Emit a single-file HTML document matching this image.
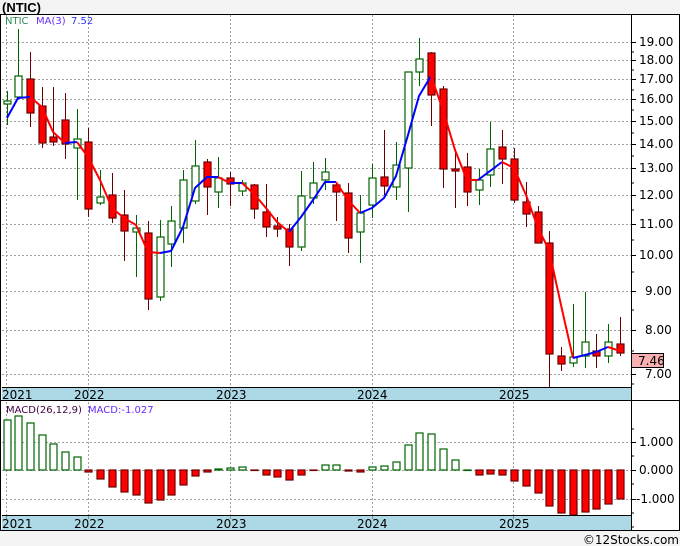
<!DOCTYPE html>
<html><head><meta charset="utf-8"><style>
html,body{margin:0;padding:0;background:#f4f4f4;}
svg{display:block;font-family:"DejaVu Sans","Liberation Sans",sans-serif;}
.gw{stroke:#006400;stroke-width:1;}
.rw{stroke:#6b0000;stroke-width:1;}
.gb{fill:#fff;stroke:#006400;stroke-width:1.2;}
.rb{fill:#ff0000;stroke:#6b0000;stroke-width:1.2;}
.grid{stroke:#a0a0a0;stroke-width:1;stroke-dasharray:2,2;}
.ax{font-size:12px;fill:#000;}
</style></head><body>
<svg width="680" height="546" viewBox="0 0 680 546" xmlns="http://www.w3.org/2000/svg">
<rect x="0" y="0" width="680" height="546" fill="#f4f4f4"/>
<text x="2" y="12" font-size="13" font-weight="bold" font-family="Liberation Sans,sans-serif" fill="#000">(NTIC)</text>
<rect x="0.5" y="14.5" width="679" height="516" fill="#fff" stroke="#000"/>
<!-- price grid -->
<g class="grid">
<line x1="2" x2="631" y1="42.5" y2="42.5"/><line x1="2" x2="631" y1="60.5" y2="60.5"/><line x1="2" x2="631" y1="79.5" y2="79.5"/><line x1="2" x2="631" y1="99.5" y2="99.5"/><line x1="2" x2="631" y1="121.5" y2="121.5"/><line x1="2" x2="631" y1="144.5" y2="144.5"/><line x1="2" x2="631" y1="168.5" y2="168.5"/><line x1="2" x2="631" y1="195.5" y2="195.5"/><line x1="2" x2="631" y1="224.5" y2="224.5"/><line x1="2" x2="631" y1="255.5" y2="255.5"/><line x1="2" x2="631" y1="291.5" y2="291.5"/><line x1="2" x2="631" y1="330.5" y2="330.5"/><line x1="2" x2="631" y1="374.5" y2="374.5"/>
<line x1="6.5" x2="6.5" y1="15" y2="387"/><line x1="88.5" x2="88.5" y1="15" y2="387"/><line x1="230.5" x2="230.5" y1="15" y2="387"/><line x1="372.5" x2="372.5" y1="15" y2="387"/><line x1="513.5" x2="513.5" y1="15" y2="387"/>
<line x1="2" x2="631" y1="442.5" y2="442.5"/><line x1="2" x2="631" y1="470.5" y2="470.5"/><line x1="2" x2="631" y1="499.5" y2="499.5"/>
<line x1="6.5" x2="6.5" y1="402" y2="515"/><line x1="88.5" x2="88.5" y1="402" y2="515"/><line x1="230.5" x2="230.5" y1="402" y2="515"/><line x1="372.5" x2="372.5" y1="402" y2="515"/><line x1="513.5" x2="513.5" y1="402" y2="515"/>
</g>
<!-- candles -->
<g>
<line class="gw" x1="7.5" x2="7.5" y1="91" y2="125"/><rect class="gb" x="4" y="101" width="7" height="3"/>
<line class="gw" x1="18.5" x2="18.5" y1="29" y2="99"/><rect class="gb" x="15" y="76" width="7" height="21"/>
<line class="rw" x1="30.5" x2="30.5" y1="52" y2="127"/><rect class="rb" x="27" y="79" width="7" height="34"/>
<line class="rw" x1="42.5" x2="42.5" y1="87" y2="148"/><rect class="rb" x="39" y="106" width="7" height="37"/>
<line class="rw" x1="53.5" x2="53.5" y1="87" y2="146"/><rect class="rb" x="50" y="137" width="7" height="5"/>
<line class="rw" x1="65.5" x2="65.5" y1="93" y2="159"/><rect class="rb" x="62" y="120" width="7" height="24"/>
<line class="gw" x1="77.5" x2="77.5" y1="109" y2="200"/><rect class="gb" x="74" y="139" width="7" height="9"/>
<line class="rw" x1="88.5" x2="88.5" y1="128" y2="217"/><rect class="rb" x="85" y="142" width="7" height="67"/>
<line class="gw" x1="100.5" x2="100.5" y1="170" y2="205"/><rect class="gb" x="97" y="197" width="7" height="6"/>
<line class="rw" x1="112.5" x2="112.5" y1="173" y2="223"/><rect class="rb" x="109" y="195" width="7" height="23"/>
<line class="rw" x1="124.5" x2="124.5" y1="190" y2="261"/><rect class="rb" x="121" y="215" width="7" height="16"/>
<line class="gw" x1="136.5" x2="136.5" y1="215" y2="277"/><rect class="gb" x="133" y="228" width="7" height="4"/>
<line class="rw" x1="148.5" x2="148.5" y1="221" y2="310"/><rect class="rb" x="145" y="233" width="7" height="66"/>
<line class="gw" x1="160.5" x2="160.5" y1="220" y2="301"/><rect class="gb" x="157" y="237" width="7" height="60"/>
<line class="gw" x1="171.5" x2="171.5" y1="206" y2="267"/><rect class="gb" x="168" y="221" width="7" height="23"/>
<line class="gw" x1="183.5" x2="183.5" y1="170" y2="243"/><rect class="gb" x="180" y="180" width="7" height="48"/>
<line class="gw" x1="195.5" x2="195.5" y1="140" y2="204"/><rect class="gb" x="192" y="166" width="7" height="35"/>
<line class="rw" x1="207.5" x2="207.5" y1="159" y2="215"/><rect class="rb" x="204" y="162" width="7" height="25"/>
<line class="gw" x1="218.5" x2="218.5" y1="157" y2="208"/><rect class="gb" x="215" y="178" width="7" height="14"/>
<line class="rw" x1="230.5" x2="230.5" y1="172" y2="206"/><rect class="rb" x="227" y="178" width="7" height="6"/>
<line class="gw" x1="242.5" x2="242.5" y1="180" y2="196"/><rect class="gb" x="239" y="183" width="7" height="8"/>
<line class="rw" x1="254.5" x2="254.5" y1="184" y2="219"/><rect class="rb" x="251" y="185" width="7" height="24"/>
<line class="rw" x1="266.5" x2="266.5" y1="184" y2="237"/><rect class="rb" x="263" y="212" width="7" height="15"/>
<line class="rw" x1="277.5" x2="277.5" y1="217" y2="237"/><rect class="rb" x="274" y="226" width="7" height="3"/>
<line class="rw" x1="289.5" x2="289.5" y1="224" y2="266"/><rect class="rb" x="286" y="229" width="7" height="18"/>
<line class="gw" x1="301.5" x2="301.5" y1="171" y2="251"/><rect class="gb" x="298" y="196" width="7" height="51"/>
<line class="gw" x1="313.5" x2="313.5" y1="162" y2="204"/><rect class="gb" x="310" y="183" width="7" height="15"/>
<line class="gw" x1="325.5" x2="325.5" y1="158" y2="190"/><rect class="gb" x="322" y="172" width="7" height="8"/>
<line class="rw" x1="336.5" x2="336.5" y1="182" y2="221"/><rect class="rb" x="333" y="185" width="7" height="7"/>
<line class="rw" x1="348.5" x2="348.5" y1="183" y2="253"/><rect class="rb" x="345" y="193" width="7" height="45"/>
<line class="gw" x1="360.5" x2="360.5" y1="195" y2="263"/><rect class="gb" x="357" y="213" width="7" height="19"/>
<line class="gw" x1="372.5" x2="372.5" y1="164" y2="218"/><rect class="gb" x="369" y="178" width="7" height="27"/>
<line class="rw" x1="384.5" x2="384.5" y1="130" y2="195"/><rect class="rb" x="381" y="177" width="7" height="9"/>
<line class="gw" x1="396.5" x2="396.5" y1="142" y2="200"/><rect class="gb" x="393" y="165" width="7" height="22"/>
<line class="gw" x1="408.5" x2="408.5" y1="72" y2="212"/><rect class="gb" x="405" y="72" width="7" height="96"/>
<line class="gw" x1="419.5" x2="419.5" y1="38" y2="86"/><rect class="gb" x="416" y="59" width="7" height="13"/>
<line class="rw" x1="431.5" x2="431.5" y1="52" y2="126"/><rect class="rb" x="428" y="53" width="7" height="42"/>
<line class="rw" x1="443.5" x2="443.5" y1="86" y2="188"/><rect class="rb" x="440" y="89" width="7" height="80"/>
<line class="rw" x1="455.5" x2="455.5" y1="149" y2="208"/><rect class="rb" x="452" y="169" width="7" height="2"/>
<line class="rw" x1="467.5" x2="467.5" y1="153" y2="206"/><rect class="rb" x="464" y="167" width="7" height="25"/>
<line class="gw" x1="479.5" x2="479.5" y1="169" y2="205"/><rect class="gb" x="476" y="180" width="7" height="10"/>
<line class="gw" x1="490.5" x2="490.5" y1="122" y2="187"/><rect class="gb" x="487" y="149" width="7" height="26"/>
<line class="rw" x1="502.5" x2="502.5" y1="130" y2="184"/><rect class="rb" x="499" y="147" width="7" height="12"/>
<line class="rw" x1="514.5" x2="514.5" y1="148" y2="203"/><rect class="rb" x="511" y="159" width="7" height="41"/>
<line class="rw" x1="526.5" x2="526.5" y1="182" y2="227"/><rect class="rb" x="523" y="202" width="7" height="12"/>
<line class="rw" x1="538.5" x2="538.5" y1="206" y2="243"/><rect class="rb" x="535" y="212" width="7" height="31"/>
<line class="rw" x1="549.5" x2="549.5" y1="231" y2="387"/><rect class="rb" x="546" y="243" width="7" height="111"/>
<line class="rw" x1="561.5" x2="561.5" y1="347" y2="371"/><rect class="rb" x="558" y="356" width="7" height="8"/>
<line class="gw" x1="573.5" x2="573.5" y1="304" y2="367"/><rect class="gb" x="570" y="357" width="7" height="6"/>
<line class="gw" x1="585.5" x2="585.5" y1="292" y2="368"/><rect class="gb" x="582" y="342" width="7" height="14"/>
<line class="rw" x1="596.5" x2="596.5" y1="334" y2="368"/><rect class="rb" x="593" y="351" width="7" height="5"/>
<line class="gw" x1="608.5" x2="608.5" y1="324" y2="363"/><rect class="gb" x="605" y="342" width="7" height="14"/>
<line class="rw" x1="620.5" x2="620.5" y1="317" y2="356"/><rect class="rb" x="617" y="344" width="7" height="9"/>
</g>
<!-- MA line -->
<g fill="none" stroke-width="2" stroke-linejoin="round">
<polyline stroke="#0000ff" points="7,118 18,98 30,97"/>
<polyline stroke="#ff0000" points="30,97 42,107 53,132 65,143"/>
<polyline stroke="#0000ff" points="65,143 77,142"/>
<polyline stroke="#ff0000" points="77,142 88,157 100,180 112,208 124,218 136,225 148,252 160,253"/>
<polyline stroke="#0000ff" points="160,253 171,251 183,227 195,188 207,177 218,177"/>
<polyline stroke="#ff0000" points="218,177 230,183"/>
<polyline stroke="#0000ff" points="230,183 242,183"/>
<polyline stroke="#ff0000" points="242,183 254,194 266,208 277,222 289,232"/>
<polyline stroke="#0000ff" points="289,232 301,217 313,200 325,182 336,182"/>
<polyline stroke="#ff0000" points="336,182 348,200 360,213"/>
<polyline stroke="#0000ff" points="360,213 372,208 384,198 396,176 408,135 419,96 431,76"/>
<polyline stroke="#ff0000" points="431,76 443,110 455,150 467,180 478,180"/>
<polyline stroke="#0000ff" points="478,180 490,171 502,162"/>
<polyline stroke="#ff0000" points="502,162 514,168 526,195 538,228 549,250 561,305 573,358"/>
<polyline stroke="#0000ff" points="573,358 585,355 596,352 608,347"/>
<polyline stroke="#ff0000" points="608,347 620,351"/>
</g>
<text x="5" y="24" font-size="10" fill="#2e8b57">NTIC</text>
<text x="36" y="24" font-size="10" fill="#6a2cff">MA(3)</text>
<text x="71" y="24" font-size="10" fill="#3333ff">7.52</text>
<!-- MACD bars -->
<g>
<rect class="gb" x="4" y="420" width="7" height="50"/><rect class="gb" x="15" y="416" width="7" height="54"/><rect class="gb" x="27" y="423" width="7" height="47"/><rect class="gb" x="39" y="435" width="7" height="35"/><rect class="gb" x="50" y="444" width="7" height="26"/><rect class="gb" x="62" y="452" width="7" height="18"/><rect class="gb" x="74" y="457" width="7" height="13"/>
<rect class="rb" x="85" y="470" width="7" height="2"/><rect class="rb" x="97" y="470" width="7" height="9"/><rect class="rb" x="109" y="470" width="7" height="17"/><rect class="rb" x="121" y="470" width="7" height="22"/><rect class="rb" x="133" y="470" width="7" height="25"/><rect class="rb" x="145" y="470" width="7" height="33"/><rect class="rb" x="157" y="470" width="7" height="30"/><rect class="rb" x="168" y="470" width="7" height="25"/><rect class="rb" x="180" y="470" width="7" height="15"/><rect class="rb" x="192" y="470" width="7" height="6"/><rect class="rb" x="204" y="470" width="7" height="2"/>
<rect class="gb" x="215" y="469" width="7" height="1"/><rect class="gb" x="227" y="468" width="7" height="2"/><rect class="gb" x="239" y="467" width="7" height="3"/>
<rect class="rb" x="251" y="470" width="7" height="0.5"/><rect class="rb" x="263" y="470" width="7" height="5"/><rect class="rb" x="274" y="470" width="7" height="7"/><rect class="rb" x="286" y="470" width="7" height="10"/><rect class="rb" x="298" y="470" width="7" height="5"/><rect class="rb" x="310" y="470" width="7" height="0.5"/>
<rect class="gb" x="322" y="465" width="7" height="5"/><rect class="gb" x="333" y="465" width="7" height="5"/>
<rect class="rb" x="345" y="470" width="7" height="1"/><rect class="rb" x="357" y="470" width="7" height="2"/>
<rect class="gb" x="369" y="467" width="7" height="3"/><rect class="gb" x="381" y="466" width="7" height="4"/><rect class="gb" x="393" y="462" width="7" height="8"/><rect class="gb" x="405" y="445" width="7" height="25"/><rect class="gb" x="416" y="433" width="7" height="37"/><rect class="gb" x="428" y="434" width="7" height="36"/><rect class="gb" x="440" y="449" width="7" height="21"/><rect class="gb" x="452" y="460" width="7" height="10"/><rect class="gb" x="464" y="470" width="7" height="0.5"/>
<rect class="rb" x="476" y="470" width="7" height="5"/><rect class="rb" x="487" y="470" width="7" height="4"/><rect class="rb" x="499" y="470" width="7" height="5"/><rect class="rb" x="511" y="470" width="7" height="11"/><rect class="rb" x="523" y="470" width="7" height="16"/><rect class="rb" x="535" y="470" width="7" height="23"/><rect class="rb" x="546" y="470" width="7" height="36"/><rect class="rb" x="558" y="470" width="7" height="43"/><rect class="rb" x="570" y="470" width="7" height="45"/><rect class="rb" x="582" y="470" width="7" height="42"/><rect class="rb" x="593" y="470" width="7" height="39"/><rect class="rb" x="605" y="470" width="7" height="34"/><rect class="rb" x="617" y="470" width="7" height="29"/>
</g>
<text x="6" y="413" font-size="10" fill="#400040">MACD(26,12,9)</text>
<text x="88" y="413" font-size="10" fill="#6a2cff">MACD:-1.027</text>
<!-- date bands -->
<rect x="2" y="387" width="629" height="13" fill="#add8e6"/>
<line x1="2" x2="631" y1="387.5" y2="387.5" stroke="#000"/>
<line x1="0" x2="680" y1="400.5" y2="400.5" stroke="#000"/>
<rect x="2" y="515" width="629" height="15" fill="#add8e6"/>
<line x1="2" x2="631" y1="515.5" y2="515.5" stroke="#000"/>
<g stroke="#888"><line x1="6.5" x2="6.5" y1="388" y2="391"/><line x1="88.5" x2="88.5" y1="388" y2="391"/><line x1="230.5" x2="230.5" y1="388" y2="391"/><line x1="372.5" x2="372.5" y1="388" y2="391"/><line x1="513.5" x2="513.5" y1="388" y2="391"/>
<line x1="6.5" x2="6.5" y1="516" y2="519"/><line x1="88.5" x2="88.5" y1="516" y2="519"/><line x1="230.5" x2="230.5" y1="516" y2="519"/><line x1="372.5" x2="372.5" y1="516" y2="519"/><line x1="513.5" x2="513.5" y1="516" y2="519"/></g>
<g class="ax" font-size="11">
<text x="2" y="399">2021</text><text x="74" y="399">2022</text><text x="216" y="399">2023</text><text x="357" y="399">2024</text><text x="499" y="399">2025</text>
<text x="2" y="528">2021</text><text x="74" y="528">2022</text><text x="216" y="528">2023</text><text x="357" y="528">2024</text><text x="499" y="528">2025</text>
</g>
<!-- right axis -->
<line x1="631.5" x2="631.5" y1="14" y2="531" stroke="#000"/>
<g stroke="#000">
<line x1="631" x2="636" y1="42.5" y2="42.5"/><line x1="631" x2="636" y1="60.5" y2="60.5"/><line x1="631" x2="636" y1="79.5" y2="79.5"/><line x1="631" x2="636" y1="99.5" y2="99.5"/><line x1="631" x2="636" y1="121.5" y2="121.5"/><line x1="631" x2="636" y1="144.5" y2="144.5"/><line x1="631" x2="636" y1="168.5" y2="168.5"/><line x1="631" x2="636" y1="195.5" y2="195.5"/><line x1="631" x2="636" y1="224.5" y2="224.5"/><line x1="631" x2="636" y1="255.5" y2="255.5"/><line x1="631" x2="636" y1="291.5" y2="291.5"/><line x1="631" x2="636" y1="330.5" y2="330.5"/><line x1="631" x2="636" y1="374.5" y2="374.5"/>
<line x1="631" x2="634" y1="52" y2="52"/><line x1="631" x2="634" y1="70" y2="70"/><line x1="631" x2="634" y1="90" y2="90"/><line x1="631" x2="634" y1="110" y2="110"/><line x1="631" x2="634" y1="133" y2="133"/><line x1="631" x2="634" y1="156" y2="156"/><line x1="631" x2="634" y1="183" y2="183"/><line x1="631" x2="634" y1="210" y2="210"/><line x1="631" x2="634" y1="240" y2="240"/><line x1="631" x2="634" y1="272" y2="272"/><line x1="631" x2="634" y1="310" y2="310"/><line x1="631" x2="634" y1="351" y2="351"/><line x1="631" x2="634" y1="384" y2="384"/>
<line x1="631" x2="636" y1="442.5" y2="442.5"/><line x1="631" x2="636" y1="470.5" y2="470.5"/><line x1="631" x2="636" y1="499.5" y2="499.5"/>
<line x1="631" x2="634" y1="429" y2="429"/><line x1="631" x2="634" y1="456" y2="456"/><line x1="631" x2="634" y1="484" y2="484"/><line x1="631" x2="634" y1="513" y2="513"/><line x1="631" x2="634" y1="527" y2="527"/>
</g>
<g class="ax" font-size="11">
<text x="639" y="46">19.00</text><text x="639" y="64">18.00</text><text x="639" y="83">17.00</text><text x="639" y="103">16.00</text><text x="639" y="125">15.00</text><text x="639" y="148">14.00</text><text x="639" y="172">13.00</text><text x="639" y="199">12.00</text><text x="639" y="228">11.00</text><text x="639" y="259">10.00</text><text x="645" y="295">9.00</text><text x="645" y="334">8.00</text><text x="645" y="378">7.00</text>
<text x="639" y="446">1.000</text><text x="639" y="474">0.000</text><text x="636" y="503">-1.000</text>
</g>
<rect x="631.5" y="353.5" width="32" height="14" fill="#f8b0b0" stroke="#000"/>
<text x="638" y="365" class="ax" font-size="11">7.46</text>
<text x="679" y="544" text-anchor="end" font-size="12" fill="#000">©12Stocks.com</text>
</svg>
</body></html>
